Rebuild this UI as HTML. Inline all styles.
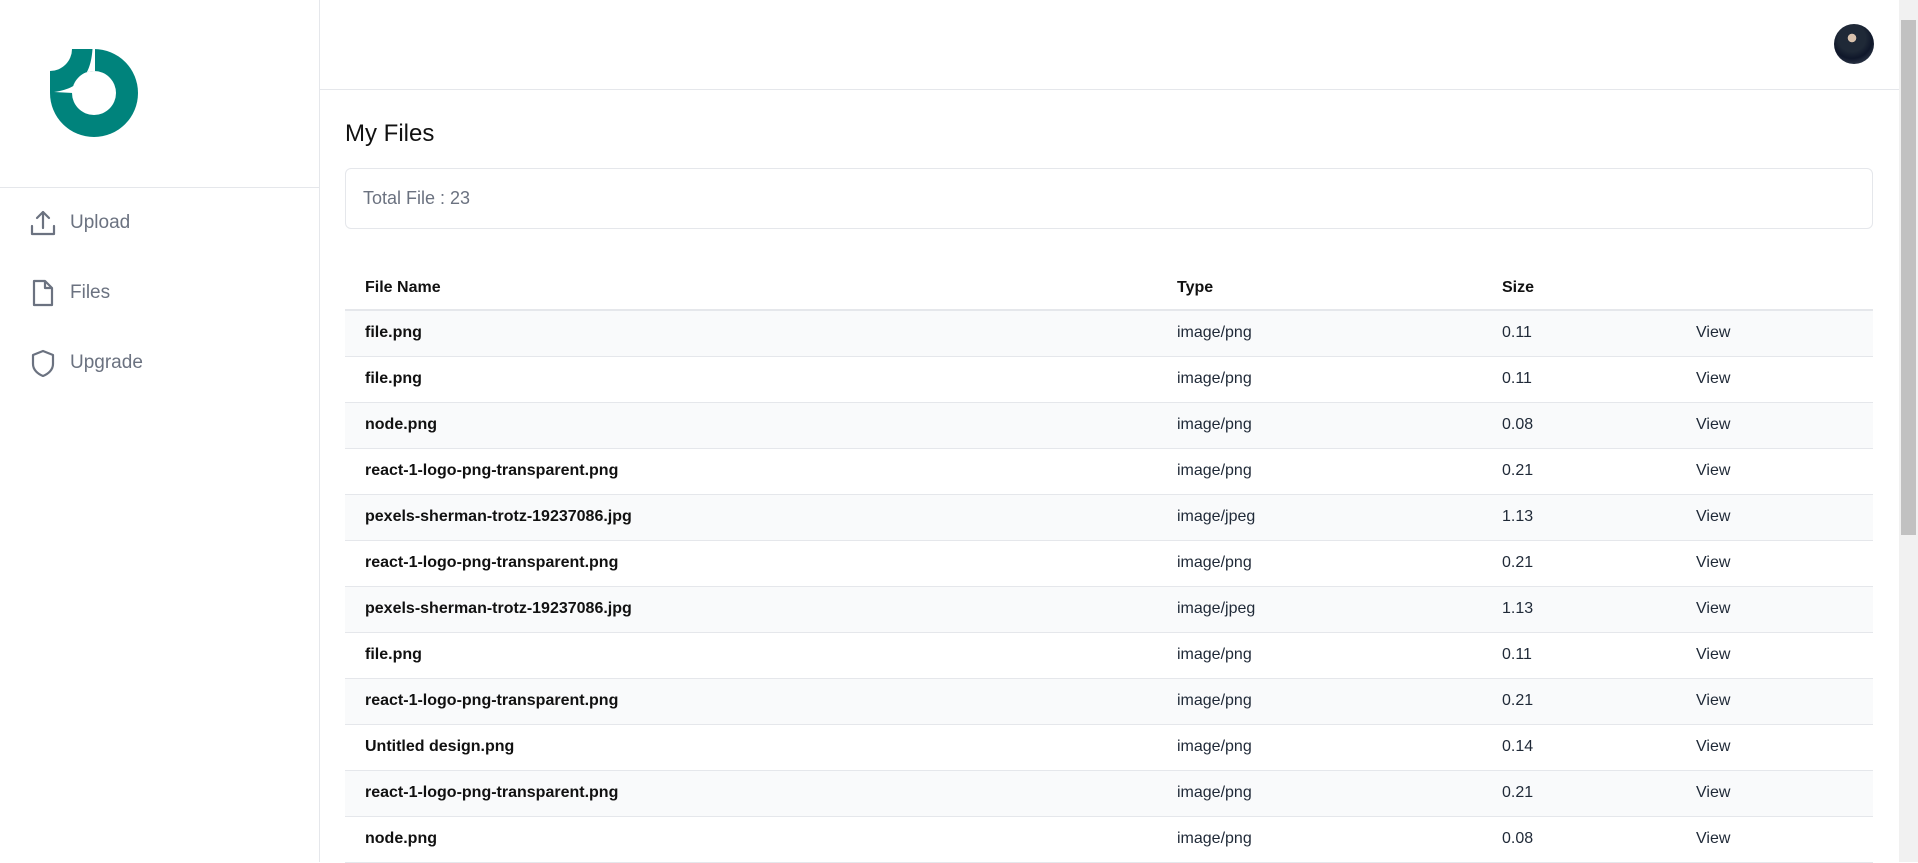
<!DOCTYPE html>
<html><head><meta charset="utf-8"><style>
*{margin:0;padding:0;box-sizing:border-box}
body{width:1918px;height:862px;overflow:hidden;background:#fff;font-family:"Liberation Sans",sans-serif;position:relative}
.side{position:absolute;left:0;top:0;width:320px;height:862px;border-right:1px solid #e5e7eb}
.side .sep{position:absolute;left:0;top:187px;width:320px;border-top:1px solid #e5e7eb}
.nav{position:absolute;left:30px;display:flex;align-items:center;color:#6b7280;font-size:19px}
.nav svg{margin-right:14px}
.hdr{position:absolute;left:320px;top:89px;width:1579px;border-top:1px solid #e5e7eb}
.av{position:absolute;left:1834px;top:24px;width:40px;height:40px;border-radius:50%;background:radial-gradient(circle at 45% 35%,#d9c2ad 0 12%,#1f2937 13% 40%,#0f172a 60%,#4b5563);overflow:hidden}
h1{position:absolute;left:345px;top:120px;font-size:24px;font-weight:normal;color:#111}
.box{position:absolute;left:345px;top:168px;width:1528px;height:61px;border:1px solid #e5e7eb;border-radius:6px;color:#6b7280;font-size:18px;padding-left:17px;line-height:59px}
table{position:absolute;left:345px;top:266px;width:1528px;border-collapse:collapse;font-size:16px;color:#1f2937}
th{text-align:left;font-weight:bold;height:44px;border-bottom:2px solid #e5e7eb;color:#111;font-size:16px}
td{height:46px;border-bottom:1px solid #e5e7eb}
td:first-child,th:first-child{padding-left:20px}
td:first-child{font-weight:bold;color:#111}
tbody tr:nth-child(odd){background:#f9fafb}
.sb{position:absolute;left:1899px;top:0;width:19px;height:862px;background:#f1f1f1}
.th{position:absolute;left:1901px;top:20px;width:15px;height:515px;background:#c1c1c1}
</style></head><body>
<div class="side">
<svg style="position:absolute;left:0;top:0" width="160" height="160">
<circle cx="94" cy="93" r="44" fill="#00837c"/>
<rect x="50" y="49" width="44" height="44" fill="#00837c"/>
<circle cx="50" cy="49" r="22" fill="#fff"/>
<path d="M92.5,49 C91,70 84,88 54,92 L73,93 A21,21 0 0 1 95,71 L95,49 Z" fill="#fff"/>
<circle cx="94" cy="93" r="22" fill="#fff"/>
</svg>
<div class="sep"></div>
<div class="nav" style="top:209px"><svg width="26" height="28" viewBox="0 0 26 28" fill="none" stroke="#6b7280" stroke-width="2.2" stroke-linecap="round" stroke-linejoin="round"><path d="M13 19V3M7 9l6-6 6 6M2 17v8h22v-8"/></svg>Upload</div>
<div class="nav" style="top:279px"><svg width="26" height="28" viewBox="0 0 26 28" fill="none" stroke="#6b7280" stroke-width="2.2" stroke-linejoin="round"><path d="M4 2h11l7 7v17H4z M15 2v7h7"/></svg>Files</div>
<div class="nav" style="top:349px"><svg width="26" height="28" viewBox="0 0 26 28" fill="none" stroke="#6b7280" stroke-width="2.2" stroke-linejoin="round"><path d="M13 2l10 4v9c0 6-5 10-10 12C8 25 3 21 3 15V6z"/></svg>Upgrade</div>
</div>
<div class="hdr"></div>
<div class="av"></div>
<h1>My Files</h1>
<div class="box">Total File : 23</div>
<table>
<colgroup><col style="width:832px"><col style="width:325px"><col style="width:194px"><col></colgroup>
<thead><tr><th>File Name</th><th>Type</th><th>Size</th><th></th></tr></thead>
<tbody>
<tr><td>file.png</td><td>image/png</td><td>0.11</td><td>View</td></tr>
<tr><td>file.png</td><td>image/png</td><td>0.11</td><td>View</td></tr>
<tr><td>node.png</td><td>image/png</td><td>0.08</td><td>View</td></tr>
<tr><td>react-1-logo-png-transparent.png</td><td>image/png</td><td>0.21</td><td>View</td></tr>
<tr><td>pexels-sherman-trotz-19237086.jpg</td><td>image/jpeg</td><td>1.13</td><td>View</td></tr>
<tr><td>react-1-logo-png-transparent.png</td><td>image/png</td><td>0.21</td><td>View</td></tr>
<tr><td>pexels-sherman-trotz-19237086.jpg</td><td>image/jpeg</td><td>1.13</td><td>View</td></tr>
<tr><td>file.png</td><td>image/png</td><td>0.11</td><td>View</td></tr>
<tr><td>react-1-logo-png-transparent.png</td><td>image/png</td><td>0.21</td><td>View</td></tr>
<tr><td>Untitled design.png</td><td>image/png</td><td>0.14</td><td>View</td></tr>
<tr><td>react-1-logo-png-transparent.png</td><td>image/png</td><td>0.21</td><td>View</td></tr>
<tr><td>node.png</td><td>image/png</td><td>0.08</td><td>View</td></tr>
</tbody></table>
<div class="sb"></div><div class="th"></div>
</body></html>
